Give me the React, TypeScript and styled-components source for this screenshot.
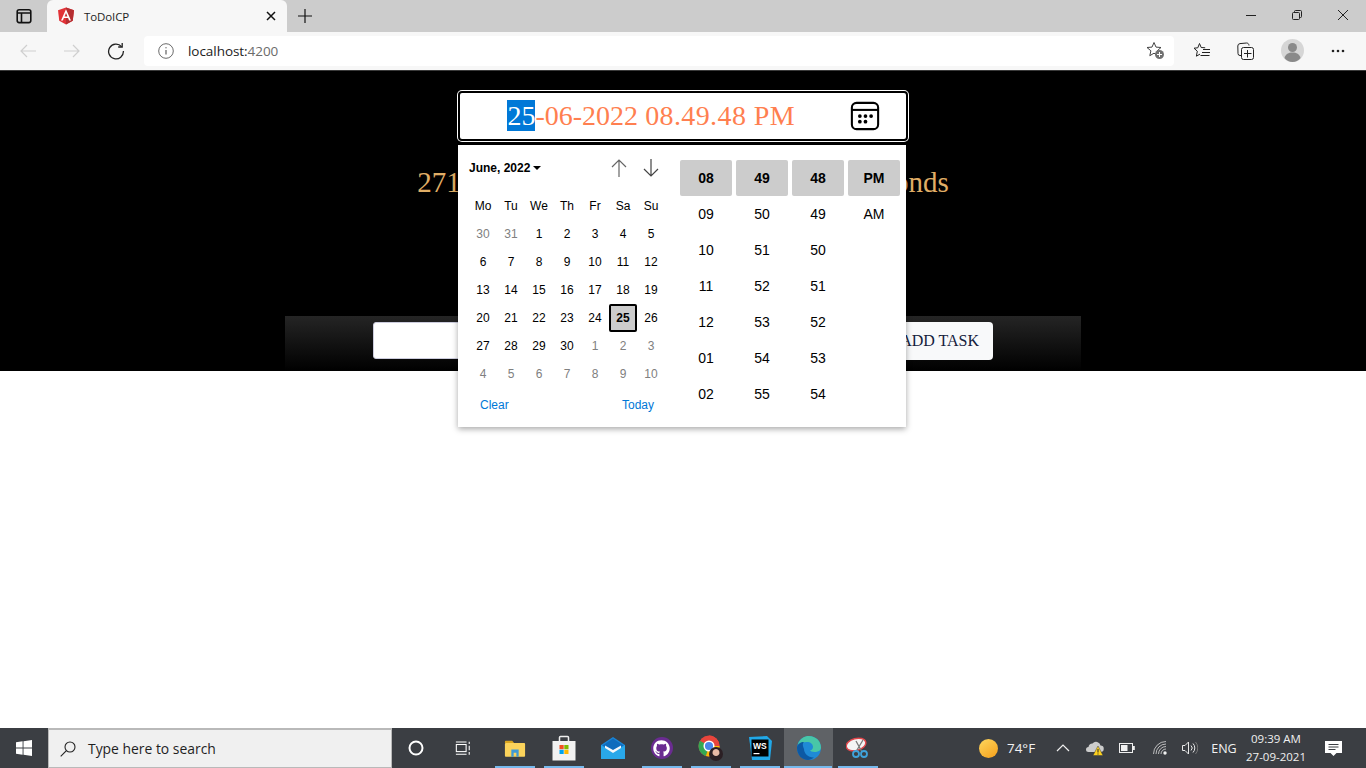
import React from "react";
import styled, { createGlobalStyle } from "styled-components";
import { FaGithub } from "react-icons/fa";

const Global = createGlobalStyle`
  html, body { margin: 0; padding: 0; height: 100%; overflow: hidden; background: #fff; }
  #root { height: 100%; }
  * { box-sizing: border-box; }
`;

const Page = styled.div`
  width: 1366px; height: 768px; display: flex; flex-direction: column;
  font-family: "Open Sans", "Noto Sans", sans-serif;
`;
const TabStrip = styled.div`
  height: 32px; background: #cccccc; display: flex; align-items: flex-end; flex: none;
`;
const PanelButton = styled.div`
  width: 47px; height: 32px; display: flex; align-items: center; justify-content: center;
`;
const Tab = styled.div`
  width: 240px; height: 32px; background: #f7f7f7; border-radius: 6px 6px 0 0;
  display: flex; align-items: center; padding: 0 10px; position: relative;
`;
const TabTitle = styled.span`
  font-size: 11.5px; color: #1f1f1f; margin-left: 9px; flex: 1; letter-spacing: -0.1px;
`;
const NewTab = styled.div`
  width: 36px; height: 32px; display: flex; align-items: center; justify-content: center;
`;
const Spacer = styled.div`flex: 1;`;
const WinBtn = styled.div`
  width: 46px; height: 30px; align-self: flex-start; display: flex; align-items: center; justify-content: center;
`;
const Toolbar = styled.div`
  height: 39px; background: #f7f7f7; border-bottom: 1px solid #3a3a3a; display: flex; align-items: center; flex: none;
  padding-bottom: 1px;
`;
const NavBtn = styled.div<{ $w: number }>`
  width: ${p => p.$w}px; height: 30px; display: flex; align-items: center; justify-content: center; flex: none;
`;
const Omnibox = styled.div`
  width: 1030px; height: 30px; background: #fff; border-radius: 4px; display: flex; align-items: center;
  padding: 0 9px 0 14px; flex: none;
`;
const Url = styled.span`
  font-size: 13.5px; color: #222; margin-left: 14px; flex: 1; letter-spacing: -0.05px;
  & > em { font-style: normal; color: #6b6b6b; }
`;
const Hero = styled.div`
  height: 300px; background: #000; display: flex; flex-direction: column; align-items: center;
  padding-top: 20px; flex: none; font-family: "Liberation Serif", serif;
`;
const PickerWrap = styled.div`
  position: relative; width: 450px; height: 50px;
`;
const PickerField = styled.div`
  width: 100%; height: 100%; background: #fff; border: 2px solid #000; box-shadow: 0 0 0 1px #fff; border-radius: 4px;
  display: flex; align-items: center; justify-content: flex-end; padding-right: 26px;
`;
const PickerText = styled.div`
  font-size: 28px; color: #ff7f50; margin-right: 55px; line-height: 28px; white-space: nowrap;
  & > mark { background: #0078d7; color: #fff; }
`;
const PickerTime = styled.span`
  letter-spacing: 0.4px;
`;
const Popup = styled.div`
  position: absolute; left: 0; top: 54px; width: 448px; height: 282px; background: #fff;
  box-shadow: 0 2px 6px rgba(0,0,0,0.35); display: flex; z-index: 2;
  font-family: "Liberation Sans", Arial, sans-serif; color: #000;
`;
const Calendar = styled.div`
  width: 222px; padding: 14px 0 0 11px; flex: none;
`;
const CalHead = styled.div`
  display: flex; align-items: center; height: 18px; width: 198px;
`;
const MonthLabel = styled.span`
  font-size: 12px; font-weight: 700; display: flex; align-items: center; gap: 3px; flex: 1;
  &::after { content: ""; border: 4px solid transparent; border-top-color: #000; border-bottom: 0; }
`;
const ArrowBtn = styled.span`
  width: 32px; display: flex; justify-content: center;
`;
const DayGrid = styled.div`
  display: grid; grid-template-columns: repeat(7, 28px); grid-auto-rows: 28px; margin-top: 15px; width: 196px;
`;
const Cell = styled.div<{ $muted?: boolean; $sel?: boolean }>`
  display: flex; align-items: center; justify-content: center; font-size: 12px;
  color: ${p => (p.$muted ? "#808080" : "#000")};
  ${p => p.$sel && "background:#ccc;border:2px solid #000;border-radius:2px;font-weight:700;"}
`;
const CalFoot = styled.div`
  display: flex; justify-content: space-between; width: 196px; padding: 0 11px; margin-top: 10px;
`;
const FootLink = styled.span`
  font-size: 12px; color: #0078d7;
`;
const TimeGrid = styled.div`
  display: flex; gap: 4px; padding-top: 15px; align-items: flex-start;
`;
const TimeCol = styled.div`display: flex; flex-direction: column; width: 52px;`;
const TimeCell = styled.div<{ $sel?: boolean }>`
  height: 36px; display: flex; align-items: center; justify-content: center; font-size: 14px; flex: none;
  ${p => p.$sel && "background:#ccc;font-weight:700;border-radius:2px;"}
`;
const Countdown = styled.div`
  color: #e0ae66; font-size: 29px; line-height: 34px; margin-top: 24px; white-space: nowrap;
`;
const FormBar = styled.div`
  margin-top: auto; width: 796px; height: 55px; background: linear-gradient(#252525, #000);
  display: flex; align-items: flex-start; padding: 6px 88px 0; gap: 4px;
`;
const TaskInput = styled.div`
  flex: 1; height: 37px; background: #fff; border-radius: 3px; border: 1px solid #ccd;
`;
const AddBtn = styled.div`
  height: 38px; width: 104px; background: #f8f9fa; border-radius: 4px; color: #14213d; font-size: 16px;
  display: flex; align-items: center; justify-content: flex-end; padding-right: 14px;
`;
const Body = styled.div`flex: 1; background: #fff;`;
const Taskbar = styled.div`
  height: 40px; background: #3b3e43; display: flex; align-items: stretch; flex: none; color: #fff;
`;
const StartBtn = styled.div`
  width: 48px; display: flex; align-items: center; justify-content: center;
`;
const SearchBox = styled.div`
  width: 344px; background: #f0f0f0; border: 2px solid #b9b9b9; border-width: 2px 1px 1px;
  display: flex; align-items: center; padding-left: 11px; color: #1f1f1f; font-size: 13.9px; gap: 12px;
`;
const BarIcon = styled.div<{ $w: number }>`
  width: ${p => p.$w}px; display: flex; align-items: center; justify-content: center; flex: none;
`;
const Apps = styled.div`
  display: flex; margin-left: 4px; flex: none;
`;
const AppSlot = styled.div<{ $open?: boolean; $active?: boolean }>`
  width: 49px; display: flex; align-items: center; justify-content: center; flex: none; position: relative;
  background: ${p => (p.$active ? "#5f6266" : "transparent")};
  ${p => p.$open && `&::after{content:"";position:absolute;bottom:0;left:${p.$active ? 0 : 5}px;right:${p.$active ? 1 : 4}px;height:2px;background:#76b9ed;}`}
`;
const GithubDisc = styled.div`
  width: 22px; height: 22px; border-radius: 50%; background: #6a2c91; color: #fff;
  display: flex; align-items: center; justify-content: center;
`;
const Tray = styled.div`
  flex: 1; display: flex; align-items: center; padding-left: 96px; position: relative;
`;
const TrayItem = styled.div<{ $w: number }>`
  width: ${p => p.$w}px; display: flex; align-items: center; justify-content: center; flex: none;
  font-size: 12.5px; color: #f2f2f2; white-space: nowrap;
`;
const Temp = styled(TrayItem)`font-size: 13.5px;`;
const Clock = styled.div`
  width: 68px; text-align: center; font-size: 11.5px; line-height: 18px; color: #f0f0f0; flex: none; margin-top: -1px;
`;

const weeks: [string, boolean?][][] = [
  [["30", true], ["31", true], ["1"], ["2"], ["3"], ["4"], ["5"]],
  [["6"], ["7"], ["8"], ["9"], ["10"], ["11"], ["12"]],
  [["13"], ["14"], ["15"], ["16"], ["17"], ["18"], ["19"]],
  [["20"], ["21"], ["22"], ["23"], ["24"], ["25"], ["26"]],
  [["27"], ["28"], ["29"], ["30"], ["1", true], ["2", true], ["3", true]],
  [["4", true], ["5", true], ["6", true], ["7", true], ["8", true], ["9", true], ["10", true]],
];
const dayNames = ["Mo", "Tu", "We", "Th", "Fr", "Sa", "Su"];
const timeCols = [
  ["08", "09", "10", "11", "12", "01", "02"],
  ["49", "50", "51", "52", "53", "54", "55"],
  ["48", "49", "50", "51", "52", "53", "54"],
  ["PM", "AM"],
];

const AngularLogo = () => (
  <svg width="18" height="18" viewBox="25 25 200 210">
    <polygon fill="#E23237" points="125,30 31.9,63.2 46.1,186.3 125,230 203.9,186.3 218.1,63.2" />
    <polygon fill="#B52E31" points="125,30 125,230 203.9,186.3 218.1,63.2" />
    <path fill="#fff" d="M125,52.1L66.8,182.6h21.7l11.7-29.2h49.4l11.7,29.2h21.7L125,52.1z M142,135.4H108l17-40.9L142,135.4z" />
  </svg>
);

const App = () => (
  <Page>
    <Global />
    <TabStrip>
      <PanelButton>
        <svg width="16" height="16" viewBox="0 0 16 16" fill="none" stroke="#111" strokeWidth="1.600">
          <rect x="1.200" y="1.800" width="13.600" height="12.800" rx="2" />
          <path d="M1.200 5h13.600M5.500 5v9.600" />
        </svg>
      </PanelButton>
      <Tab>
        <AngularLogo />
        <TabTitle>ToDoICP</TabTitle>
        <svg width="10" height="10" viewBox="0 0 10 10" stroke="#111" strokeWidth="1.500" style={{ marginRight: 1 }}>
          <path d="M1 1l8 8M9 1l-8 8" />
        </svg>
      </Tab>
      <NewTab>
        <svg width="14" height="14" viewBox="0 0 14 14" stroke="#111" strokeWidth="1.200">
          <path d="M7 0v14M0 7h14" />
        </svg>
      </NewTab>
      <Spacer />
      <WinBtn>
        <svg width="10" height="10" viewBox="0 0 10 10" stroke="#222"><path d="M0 5.500h10" /></svg>
      </WinBtn>
      <WinBtn>
        <svg width="10" height="10" viewBox="0 0 10 10" fill="none" stroke="#222">
          <rect x="0.500" y="2.500" width="7" height="7" rx="1" />
          <path d="M2.500 2.500V1.500a1 1 0 0 1 1-1h5a1 1 0 0 1 1 1v5a1 1 0 0 1-1 1h-1" />
        </svg>
      </WinBtn>
      <WinBtn>
        <svg width="10" height="10" viewBox="0 0 10 10" stroke="#222"><path d="M0 0l10 10M10 0L0 10" /></svg>
      </WinBtn>
    </TabStrip>
    <Toolbar>
      <NavBtn $w={56}>
        <svg width="16" height="14" viewBox="0 0 16 14" fill="none" stroke="#cfcfcf" strokeWidth="1.200"><path d="M16 7H1M7 1L1 7l6 6" /></svg>
      </NavBtn>
      <NavBtn $w={32}>
        <svg width="16" height="14" viewBox="0 0 16 14" fill="none" stroke="#cfcfcf" strokeWidth="1.200"><path d="M0 7h15M9 1l6 6-6 6" /></svg>
      </NavBtn>
      <NavBtn $w={56}>
        <svg width="18" height="18" viewBox="0 0 18 18" fill="none" stroke="#222" strokeWidth="1.300">
          <path d="M14.600 4.600A7.400 7.400 0 1 0 16.400 9" /><path d="M15.200 1v4h-4" />
        </svg>
      </NavBtn>
      <Omnibox>
        <svg width="16" height="16" viewBox="0 0 16 16" fill="none" stroke="#6b6b6b">
          <circle cx="8" cy="8" r="7.300" /><path d="M8 7v4.500" strokeWidth="1.300" /><circle cx="8" cy="4.800" r="0.700" fill="#6b6b6b" stroke="none" />
        </svg>
        <Url>localhost:<em>4200</em></Url>
        <svg width="19" height="19" viewBox="0 0 19 19" fill="none">
          <path d="M8 1.500l2 4.600 5 .4-3.800 3.300 1 4.900L8 12.200l-4.200 2.500 1.100-4.900L1 6.500l5-.4z" stroke="#444" strokeWidth="1" />
          <circle cx="13.500" cy="13.500" r="4.500" fill="#707070" />
          <path d="M13.500 11v5M11 13.500h5" stroke="#fff" />
        </svg>
      </Omnibox>
      <NavBtn $w={56}>
        <svg width="18" height="17" viewBox="0 0 18 17" fill="none" stroke="#222">
          <path d="M6.500 1.500l1.700 4 4 .3M1 6.200l3.300 3-.9 5 3.600-2.100M6.500 1.500L4.800 5.800 1 6.200" />
          <path d="M10 7.500h7M9 10.500h8M7.500 13.500h9" />
        </svg>
      </NavBtn>
      <NavBtn $w={32}>
        <svg width="18" height="18" viewBox="0 0 18 18" fill="none" stroke="#222">
          <path d="M4 13.500H3a2 2 0 0 1-2-2L.8 4A2.500 2.500 0 0 1 3 1.600L9.500 1c1.300 0 2.300.7 2.500 2.500" />
          <rect x="4.500" y="5.500" width="12" height="12" rx="2" />
          <path d="M10.500 8v7.500M7 11.500h7.500" />
        </svg>
      </NavBtn>
      <NavBtn $w={60}>
        <svg width="23" height="23" viewBox="0 0 23 23">
          <circle cx="11.500" cy="11.500" r="11.500" fill="#d6d6d6" />
          <circle cx="11.500" cy="8.500" r="4.500" fill="#8a8a8a" />
          <path d="M3.500 19c1-4 4-5.500 8-5.500s7 1.500 8 5.500c-2 2.600-5 4-8 4s-6-1.400-8-4z" fill="#8a8a8a" />
        </svg>
      </NavBtn>
      <NavBtn $w={32}>
        <svg width="14" height="4" viewBox="0 0 14 4" fill="#222">
          <circle cx="2" cy="2" r="1.300" /><circle cx="7" cy="2" r="1.300" /><circle cx="12" cy="2" r="1.300" />
        </svg>
      </NavBtn>
    </Toolbar>
    <Hero>
      <PickerWrap>
        <PickerField>
          <PickerText><mark>25</mark>-06-2022 <PickerTime>08.49.48 PM</PickerTime></PickerText>
          <svg width="30" height="30" viewBox="0 0 32 32" fill="none" stroke="#000" strokeWidth="2.200">
            <rect x="2" y="2" width="28" height="28" rx="5" />
            <path d="M2 9.500h28" />
            <g fill="#000" stroke="none">
              <circle cx="10.500" cy="16" r="2" /><circle cx="16.500" cy="16" r="2" /><circle cx="22.500" cy="16" r="2" />
              <circle cx="10.500" cy="22" r="2" /><circle cx="16.500" cy="22" r="2" />
            </g>
          </svg>
        </PickerField>
        <Popup>
          <Calendar>
            <CalHead>
              <MonthLabel>June, 2022</MonthLabel>
              <ArrowBtn>
                <svg width="16" height="18" viewBox="0 0 16 18" fill="none" stroke="#666" strokeWidth="1.200"><path d="M8 18V1M1 8l7-7 7 7" /></svg>
              </ArrowBtn>
              <ArrowBtn>
                <svg width="16" height="18" viewBox="0 0 16 18" fill="none" stroke="#444" strokeWidth="1.200"><path d="M8 0v17M1 10l7 7 7-7" /></svg>
              </ArrowBtn>
            </CalHead>
            <DayGrid>
              {dayNames.map(d => <Cell key={d}>{d}</Cell>)}
              {weeks.flat().map(([d, m], i) => (
                <Cell key={i} $muted={m} $sel={d === "25"}>{d}</Cell>
              ))}
            </DayGrid>
            <CalFoot>
              <FootLink>Clear</FootLink>
              <FootLink>Today</FootLink>
            </CalFoot>
          </Calendar>
          <TimeGrid>
            {timeCols.map((col, c) => (
              <TimeCol key={c}>
                {col.map((v, i) => <TimeCell key={i} $sel={i === 0}>{v}</TimeCell>)}
              </TimeCol>
            ))}
          </TimeGrid>
        </Popup>
      </PickerWrap>
      <Countdown>271 days 23 hours 09 minutes and 12 seconds</Countdown>
      <FormBar>
        <TaskInput />
        <AddBtn>ADD TASK</AddBtn>
      </FormBar>
    </Hero>
    <Body />
    <Taskbar>
      <StartBtn>
        <svg width="16" height="16" viewBox="0 0 16 16" fill="#fff">
          <path d="M0 2.300L6.600 1.300V7.500H0zM7.500 1.200L16 0V7.500H7.500zM0 8.500H6.600V14.700L0 13.700zM7.500 8.500H16V16L7.500 14.800z" />
        </svg>
      </StartBtn>
      <SearchBox>
        <svg width="16" height="16" viewBox="0 0 16 16" fill="none" stroke="#222" strokeWidth="1.100">
          <circle cx="10" cy="6" r="5" /><path d="M6.400 9.600L.7 15.300" />
        </svg>
        Type here to search
      </SearchBox>
      <BarIcon $w={48}>
        <svg width="16" height="16" viewBox="0 0 16 16" fill="none" stroke="#fff" strokeWidth="2"><circle cx="8" cy="8" r="6.500" /></svg>
      </BarIcon>
      <BarIcon $w={46}>
        <svg width="16" height="15" viewBox="0 0 18 16" fill="none" stroke="#fff" strokeWidth="1.200">
          <rect x="1.500" y="3.500" width="11" height="8" />
          <path d="M1 .7h12M1 14.500h12M16 .5v2.500M16 5v5M16 12v3" />
        </svg>
      </BarIcon>
      <Apps>
        <AppSlot $open>
          <svg width="22" height="19" viewBox="0 0 24 20">
            <path d="M1 2.500a1 1 0 0 1 1-1h7l2 2.500H1z" fill="#d9a520" />
            <rect x="1" y="4" width="22" height="15" rx="1" fill="#fbd35b" />
            <path d="M8 11h8v8h-2.500v-4.500h-3V19H8z" fill="#3f9ad6" />
          </svg>
        </AppSlot>
        <AppSlot $open>
          <svg width="24" height="26" viewBox="0 0 24 26">
            <path d="M7.500 6V2.500a1 1 0 0 1 1-1h7a1 1 0 0 1 1 1V6" fill="none" stroke="#eee" strokeWidth="1.500" />
            <rect x="0.500" y="6" width="23" height="19.500" fill="#f2f2f2" />
            <rect x="7.500" y="10" width="4.200" height="4.200" fill="#f25022" />
            <rect x="12.300" y="10" width="4.200" height="4.200" fill="#7fba00" />
            <rect x="7.500" y="14.800" width="4.200" height="4.200" fill="#00a4ef" />
            <rect x="12.300" y="14.800" width="4.200" height="4.200" fill="#ffb900" />
          </svg>
        </AppSlot>
        <AppSlot>
          <svg width="24" height="22" viewBox="0 0 24 22">
            <path d="M0 8L12 0l12 8v14H0z" fill="#1a86d8" />
            <path d="M0 8l12 8 12-8v14H0z" fill="#29a8ea" />
            <path d="M1.500 8.500L12 1.500l10.500 7L12 13.500z" fill="#0f6cbd" />
            <path d="M4 8.500L12 13l8-4.500V11l-8 5-8-5z" fill="#f4f8fb" />
          </svg>
        </AppSlot>
        <AppSlot $open>
          <GithubDisc><FaGithub size={17} /></GithubDisc>
        </AppSlot>
        <AppSlot $open>
          <svg width="26" height="26" viewBox="0 0 26 26">
            <circle cx="11" cy="11" r="10.500" fill="#e8453c" />
            <path d="M11 11L1.900 5.800A10.500 10.500 0 0 0 8 21.100z" fill="#34a853" />
            <path d="M11 .5a10.500 10.500 0 0 1 9.100 15.700L11 11z" fill="#e8453c" />
            <path d="M21.500 11a10.500 10.500 0 0 1-13.500 10L11 11z" fill="#fbbc05" />
            <circle cx="11" cy="11" r="4.800" fill="#4a86e8" stroke="#fff" strokeWidth="1.500" />
            <circle cx="18" cy="19" r="7" fill="#2b1f24" />
            <path d="M14.500 18c0-3 1.800-4 3.500-4s3.500 1 3.500 4c0 1.500-1.500 3-3.500 3s-3.500-1.500-3.500-3z" fill="#e8b9a5" />
          </svg>
        </AppSlot>
        <AppSlot $open>
          <svg width="24" height="24" viewBox="0 0 24 24">
            <path d="M1 1l18-1 5 5-2 19H4z" fill="#21a8e8" />
            <rect x="3.500" y="3.500" width="17" height="17" fill="#000" />
            <path d="M5.500 17h6v1.200h-6z" fill="#fff" />
            <text x="5" y="12.500" fontSize="8.500" fontWeight="700" fill="#fff" fontFamily="Liberation Sans">WS</text>
          </svg>
        </AppSlot>
        <AppSlot $open $active>
          <svg width="24" height="24" viewBox="0 0 24 24">
            <circle cx="12" cy="12" r="12" fill="#1f8ad6" />
            <path d="M1 8C3 2.500 7.500 0 12 0c6.500 0 12 5 12 11.500 0 3-3 4.500-6.500 4.500-2.500 0-4-.8-4.500-1.500 2-.5 3-2 3-3.500C16 8 13.500 6 10 6 6 6 2.500 8 1 11z" fill="#48c6a7" />
            <path d="M7 13c0 5 5 9 10 8.500-2 1.600-4 2.500-6 2.500C5 24 0 19 0 12 0 8 4 5.500 7 6c-2 2-1 4 0 7z" fill="#0c59a4" />
          </svg>
        </AppSlot>
        <AppSlot $open>
          <svg width="24" height="24" viewBox="0 0 24 24" fill="none">
            <ellipse cx="10" cy="8.500" rx="10" ry="6" transform="rotate(-15 10 8.500)" fill="#f4f4f4" stroke="#e0474c" strokeWidth="1.500" />
            <path d="M10 5l6 11M17 4L11 14" stroke="#7a7a7a" strokeWidth="1.300" />
            <circle cx="10" cy="18" r="3" stroke="#3fa3dc" strokeWidth="1.800" />
            <circle cx="18" cy="18" r="3" stroke="#3fa3dc" strokeWidth="1.800" />
          </svg>
        </AppSlot>
      </Apps>
      <Tray>
        <TrayItem $w={20}>
          <svg width="19" height="19" viewBox="0 0 19 19">
            <defs>
              <linearGradient id="sun" x1="0" y1="0" x2="0.700" y2="1">
                <stop offset="0" stopColor="#ffd75e" /><stop offset="1" stopColor="#f6a623" />
              </linearGradient>
            </defs>
            <circle cx="9.500" cy="9.500" r="9.500" fill="url(#sun)" />
          </svg>
        </TrayItem>
        <Temp $w={46}>74°F</Temp>
        <TrayItem $w={38}>
          <svg width="14" height="8" viewBox="0 0 14 8" fill="none" stroke="#f0f0f0" strokeWidth="1.200"><path d="M1 7l6-6 6 6" /></svg>
        </TrayItem>
        <TrayItem $w={26}>
          <svg width="18" height="16" viewBox="0 0 18 16">
            <path d="M2.500 12a2.500 2.500 0 0 1 0-5 4 4 0 0 1 4-3.500 4.500 4.500 0 0 1 8 2 3 3 0 0 1 0 6.500z" fill="#ccc" />
            <path d="M12 6l5 9.500H7z" fill="#ffd21e" stroke="#3b3e43" strokeWidth=".5" />
            <path d="M12 9v3.500M12 13.500v1" stroke="#222" />
          </svg>
        </TrayItem>
        <TrayItem $w={38}>
          <svg width="16" height="10" viewBox="0 0 16 10" fill="none">
            <rect x="0.500" y="0.500" width="13" height="9" stroke="#f0f0f0" />
            <rect x="2" y="2" width="6.500" height="6" fill="#f0f0f0" />
            <rect x="14" y="3" width="1.800" height="4" fill="#f0f0f0" />
          </svg>
        </TrayItem>
        <TrayItem $w={28}>
          <svg width="14" height="14" viewBox="0 0 14 14" fill="none" stroke="#dcdcdc">
            <path d="M.5 13A12.500 12.500 0 0 1 13 .5M3 13a10 10 0 0 1 10-10M5.500 13A7.500 7.500 0 0 1 13 5.500M8 13a5 5 0 0 1 5-5" strokeWidth=".8" />
            <circle cx="12" cy="12" r="1.700" fill="#f0f0f0" stroke="none" />
          </svg>
        </TrayItem>
        <TrayItem $w={32}>
          <svg width="16" height="14" viewBox="0 0 16 14" fill="none" stroke="#e8e8e8" strokeWidth="1">
            <path d="M.5 4.500h2.500L6.500 1v12L3 9.500H.5z" />
            <path d="M9 4.500a3.500 3.500 0 0 1 0 5M11 2.500a6.500 6.500 0 0 1 0 9" />
            <path d="M13.500 1a9 9 0 0 1 0 12" stroke="#777" />
          </svg>
        </TrayItem>
        <TrayItem $w={36}>ENG</TrayItem>
        <Clock>09:39 AM<br />27-09-2021</Clock>
        <TrayItem $w={46}>
          <svg width="17" height="17" viewBox="0 0 17 17">
            <path d="M0 1h17v12h-5.500l-3 3-3-3H0z" fill="#fff" />
            <path d="M3.500 4.500h10M3.500 7h10M3.500 9.500h7" stroke="#3b3e43" />
          </svg>
        </TrayItem>
      </Tray>
    </Taskbar>
  </Page>
);

export default App;
